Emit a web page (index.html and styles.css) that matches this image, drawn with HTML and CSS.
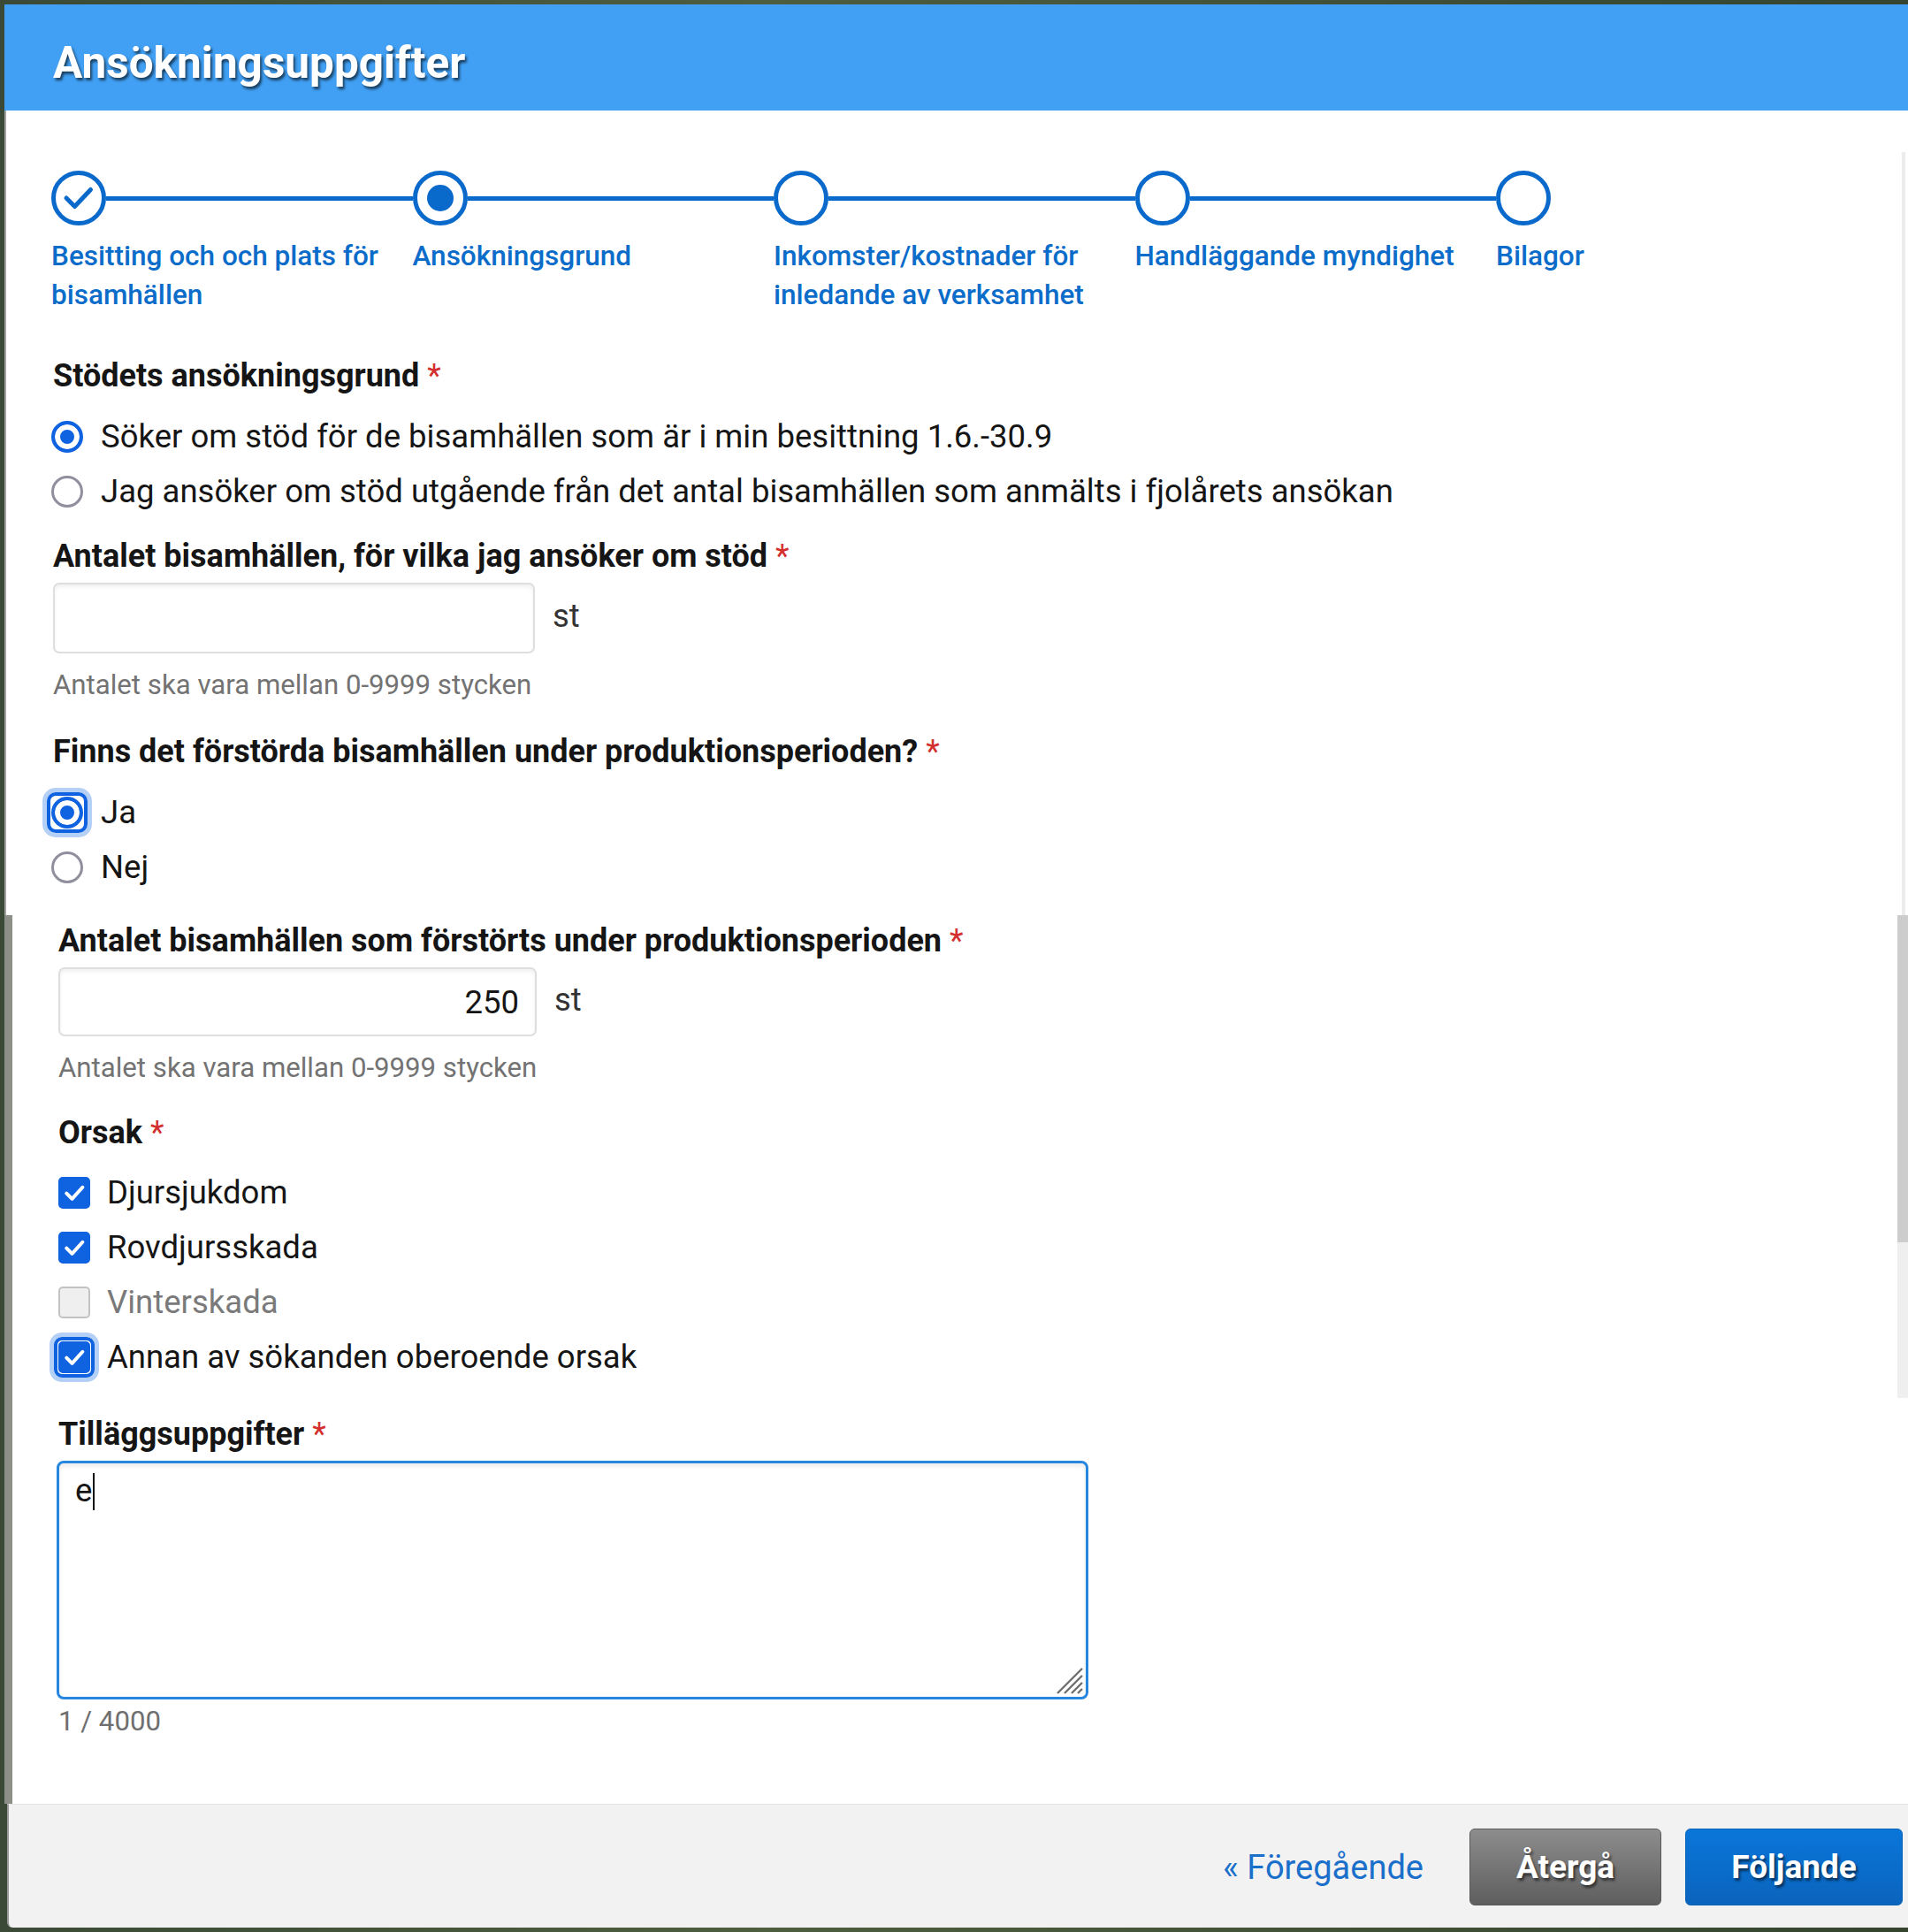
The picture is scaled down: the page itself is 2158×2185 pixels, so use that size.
FILE: index.html
```html
<!DOCTYPE html>
<html lang="sv">
<head>
<meta charset="utf-8">
<title>Ansökningsuppgifter</title>
<link rel="stylesheet" href="styles.css">
</head>
<body>
<div class="dialog">
  <header class="dialog-header">
    <h1 class="dialog-title">Ansökningsuppgifter</h1>
  </header>

  <section class="dialog-body upper">
    <ol class="stepper">
      <li class="step done">
        <div class="step-track">
          <span class="step-dot"><svg class="step-check" viewBox="0 0 40 40" width="40" height="40"><path d="M6 20 L15.5 29.5 L33.5 10.5" fill="none" stroke="#0a6acb" stroke-width="5" stroke-linecap="round" stroke-linejoin="round"/></svg></span>
          <span class="step-line"></span>
        </div>
        <div class="step-label">Besitting och och plats för bisamhällen</div>
      </li>
      <li class="step current">
        <div class="step-track">
          <span class="step-dot"><span class="step-inner"></span></span>
          <span class="step-line"></span>
        </div>
        <div class="step-label">Ansökningsgrund</div>
      </li>
      <li class="step">
        <div class="step-track">
          <span class="step-dot"></span>
          <span class="step-line"></span>
        </div>
        <div class="step-label">Inkomster/kostnader för inledande av verksamhet</div>
      </li>
      <li class="step">
        <div class="step-track">
          <span class="step-dot"></span>
          <span class="step-line"></span>
        </div>
        <div class="step-label">Handläggande myndighet</div>
      </li>
      <li class="step last">
        <div class="step-track">
          <span class="step-dot"></span>
        </div>
        <div class="step-label">Bilagor</div>
      </li>
    </ol>

    <div class="field-label first">Stödets ansökningsgrund <span class="req">*</span></div>
    <div class="choices">
      <div class="choice"><span class="radio checked"></span><span class="choice-text">Söker om stöd för de bisamhällen som är i min besittning 1.6.-30.9</span></div>
      <div class="choice"><span class="radio"></span><span class="choice-text">Jag ansöker om stöd utgående från det antal bisamhällen som anmälts i fjolårets ansökan</span></div>
    </div>

    <div class="field-label after-choices">Antalet bisamhällen, för vilka jag ansöker om stöd <span class="req">*</span></div>
    <div class="input-row">
      <div class="text-input"></div>
      <span class="unit">st</span>
    </div>
    <div class="help">Antalet ska vara mellan 0-9999 stycken</div>

    <div class="field-label after-help">Finns det förstörda bisamhällen under produktionsperioden? <span class="req">*</span></div>
    <div class="choices">
      <div class="choice"><span class="radio checked focused"></span><span class="choice-text">Ja</span></div>
      <div class="choice"><span class="radio"></span><span class="choice-text">Nej</span></div>
    </div>
  </section>

  <section class="dialog-body lower">
    <div class="field-label">Antalet bisamhällen som förstörts under produktionsperioden <span class="req">*</span></div>
    <div class="input-row">
      <div class="text-input small filled">250</div>
      <span class="unit">st</span>
    </div>
    <div class="help">Antalet ska vara mellan 0-9999 stycken</div>

    <div class="field-label after-help2">Orsak <span class="req">*</span></div>
    <div class="checks">
      <div class="choice"><span class="checkbox checked"><svg viewBox="0 0 24 24" width="30" height="30"><path d="M5 12.5 L10 17.5 L19.5 7" fill="none" stroke="#fff" stroke-width="3.2" stroke-linecap="round" stroke-linejoin="round"/></svg></span><span class="choice-text">Djursjukdom</span></div>
      <div class="choice"><span class="checkbox checked"><svg viewBox="0 0 24 24" width="30" height="30"><path d="M5 12.5 L10 17.5 L19.5 7" fill="none" stroke="#fff" stroke-width="3.2" stroke-linecap="round" stroke-linejoin="round"/></svg></span><span class="choice-text">Rovdjursskada</span></div>
      <div class="choice disabled"><span class="checkbox"></span><span class="choice-text">Vinterskada</span></div>
      <div class="choice"><span class="checkbox checked focused"><svg viewBox="0 0 24 24" width="30" height="30"><path d="M5 12.5 L10 17.5 L19.5 7" fill="none" stroke="#fff" stroke-width="3.2" stroke-linecap="round" stroke-linejoin="round"/></svg></span><span class="choice-text">Annan av sökanden oberoende orsak</span></div>
    </div>

    <div class="field-label after-checks">Tilläggsuppgifter <span class="req">*</span></div>
    <div class="textarea">
      <span class="typed">e</span><span class="caret"></span>
      <svg class="resize-grip" viewBox="0 0 40 40" width="40" height="40"><path d="M37 9 L9 37 M37 17 L17 37 M37 25 L25 37 M37 32 L32 37" stroke="#6e6e6e" stroke-width="2.4" fill="none"/></svg>
    </div>
    <div class="counter">1 / 4000</div>
  </section>

  <footer class="dialog-footer">
    <a class="prev-link" href="#">« Föregående</a>
    <button class="btn btn-gray" type="button">Återgå</button>
    <button class="btn btn-blue" type="button">Följande</button>
  </footer>

  <div class="scroll-track-thin"></div>
  <div class="scroll-thumb"></div>
  <div class="scroll-track"></div>
</div>
</body>
</html>
```

FILE: styles.css
```css
html, body {
  margin: 0;
  padding: 0;
}

body {
  background: linear-gradient(90deg, #3a4a36 0%, #4d5e3f 40%, #34442f 100%);
  font-family: Roboto, "Noto Sans", "Liberation Sans", sans-serif;
  color: #151515;
  min-height: 2185px;
}

.dialog {
  position: relative;
  margin: 5px 0 0 5px;
  width: 2153px;
}

/* Header */
.dialog-header {
  box-sizing: border-box;
  height: 120px;
  padding: 13px 0 0 55px;
  background: #41a0f4;
  display: flex;
  align-items: center;
}

.dialog-title {
  margin: 0;
  font-size: 49.5px;
  font-weight: 700;
  color: #fff;
  line-height: 1;
  text-shadow: 2px 3px 3px rgba(0, 0, 0, 0.6);
}

/* Body sections */
.dialog-body {
  background: #fff;
}

.dialog-body.upper {
  border-left: 2px solid #a3a3a3;
  padding: 68px 0 23px 53px;
}

.dialog-body.lower {
  border-left: 9px solid #8d9089;
  padding: 7px 0 73px 52px;
}

/* Stepper */
.stepper {
  list-style: none;
  margin: 0 0 0 -2px;
  padding: 0;
  display: grid;
  grid-template-columns: repeat(5, 408.5px);
}

.step-track {
  display: flex;
  align-items: center;
  height: 62px;
}

.step-dot {
  box-sizing: border-box;
  width: 62px;
  height: 62px;
  flex: none;
  border: 5px solid #0a6acb;
  border-radius: 50%;
  background: #fff;
  display: flex;
  align-items: center;
  justify-content: center;
}

.step-inner {
  width: 30px;
  height: 30px;
  border-radius: 50%;
  background: #0a6acb;
}

.step-line {
  flex: 1;
  height: 5px;
  background: #0a6acb;
}

.step-label {
  margin-top: 13px;
  padding-right: 20px;
  font-size: 31.5px;
  line-height: 44px;
  font-weight: 500;
  color: #0b6cc9;
}

/* Fields */
.field-label {
  font-size: 36px;
  line-height: 44px;
  font-weight: 700;
  color: #151515;
}

.field-label.first { margin-top: 47px; }
.field-label.after-choices { margin-top: 20px; }
.field-label.after-help { margin-top: 33px; }
.field-label.after-help2 { margin-top: 31px; }
.field-label.after-checks { margin-top: 34px; }

.req {
  color: #d32f2f;
  font-weight: 400;
}

.choices {
  margin-top: 16px;
  margin-left: -2px;
}

.checks {
  margin-top: 15px;
}

.choice {
  display: flex;
  align-items: center;
  height: 62px;
}

.choice-text {
  font-size: 36.5px;
  line-height: 44px;
  color: #151515;
}

.choice.disabled .choice-text {
  color: #7a7a7a;
}

/* Radio */
.radio {
  position: relative;
  box-sizing: border-box;
  flex: none;
  width: 36px;
  height: 36px;
  border-radius: 50%;
  border: 3px solid #8f8f9d;
  background: #fff;
  margin-right: 20px;
}

.radio.checked {
  border: 4px solid #0f62e0;
  background: #0f62e0;
  box-shadow: inset 0 0 0 6px #fff;
}

.radio.focused::after,
.checkbox.focused::after {
  content: "";
  position: absolute;
  inset: -9px;
  border: 4px solid #0f62e0;
  border-radius: 10px;
  box-shadow: 0 0 0 5px rgba(90, 150, 235, 0.45);
}

/* Checkbox */
.checkbox {
  position: relative;
  box-sizing: border-box;
  flex: none;
  width: 36px;
  height: 36px;
  border-radius: 5px;
  border: 2px solid #c2c2c2;
  background: #efefef;
  margin-right: 19px;
  display: flex;
  align-items: center;
  justify-content: center;
}

.checkbox.checked {
  border-color: #0f62e0;
  background: #0f62e0;
}

.checkbox.focused::after {
  inset: -7px;
  border-radius: 9px;
}

/* Inputs */
.input-row {
  display: flex;
  align-items: center;
  margin-top: 8px;
}

.text-input {
  box-sizing: border-box;
  width: 545px;
  height: 80px;
  border: 2px solid #dedede;
  border-radius: 7px;
  box-shadow: inset 0 3px 4px rgba(0, 0, 0, 0.06);
  background: #fff;
}

.text-input.small {
  width: 541px;
  height: 78px;
}

.text-input.filled {
  display: flex;
  align-items: center;
  justify-content: flex-end;
  padding-right: 18px;
  font-size: 36.5px;
  color: #151515;
}

.unit {
  margin-left: 20px;
  font-size: 36.5px;
  color: #333;
  padding-bottom: 6px;
}

.help {
  margin-top: 16px;
  font-size: 31.2px;
  line-height: 40px;
  color: #737373;
}

/* Textarea */
.textarea {
  position: relative;
  box-sizing: border-box;
  width: 1167px;
  height: 270px;
  margin: 8px 0 0 -2px;
  border: 3px solid #2686e0;
  border-radius: 8px;
  box-shadow: inset 0 4px 5px rgba(0, 0, 0, 0.07);
  padding: 9px 18px;
  font-size: 36.5px;
  line-height: 44px;
  color: #151515;
}

.caret {
  display: inline-block;
  width: 2px;
  height: 42px;
  background: #111;
  vertical-align: -10px;
  margin-left: 1px;
}

.resize-grip {
  position: absolute;
  right: 1px;
  bottom: 1px;
}

.counter {
  margin-top: 5px;
  font-size: 31.2px;
  line-height: 40px;
  color: #6f6f6f;
}

/* Footer */
.dialog-footer {
  box-sizing: border-box;
  height: 140px;
  margin-left: 3px;
  border-left: 2px solid #9a9a9a;
  border-top: 1px solid #e3e3e3;
  border-bottom-left-radius: 6px;
  background: #f2f2f2;
  display: flex;
  align-items: center;
  justify-content: flex-end;
  padding: 2px 6px 0 0;
}

.prev-link {
  font-size: 38px;
  color: #1a6fca;
  text-decoration: none;
  margin-right: 52px;
}

.btn {
  height: 87px;
  border-radius: 6px;
  font-family: Roboto, "Noto Sans", "Liberation Sans", sans-serif;
  font-size: 37px;
  font-weight: 700;
  color: #fff;
  text-shadow: 2px 3px 3px rgba(0, 0, 0, 0.55);
  cursor: pointer;
}

.btn-gray {
  width: 217px;
  border: 1px solid #5a5a5a;
  background: linear-gradient(#8d8d8d, #5e5e5e);
  margin-right: 27px;
}

.btn-blue {
  width: 246px;
  border: 1px solid #0b63b8;
  background: linear-gradient(#0a76da, #0a64bd);
}

/* Scrollbar decoration on the right edge */
.scroll-track-thin {
  position: absolute;
  top: 167px;
  right: 3px;
  width: 4px;
  height: 863px;
  background: #ececec;
}

.scroll-thumb {
  position: absolute;
  top: 1030px;
  right: 0;
  width: 12px;
  height: 370px;
  background: #cdcdcd;
}

.scroll-track {
  position: absolute;
  top: 1400px;
  right: 0;
  width: 12px;
  height: 176px;
  background: #efefef;
}
```
